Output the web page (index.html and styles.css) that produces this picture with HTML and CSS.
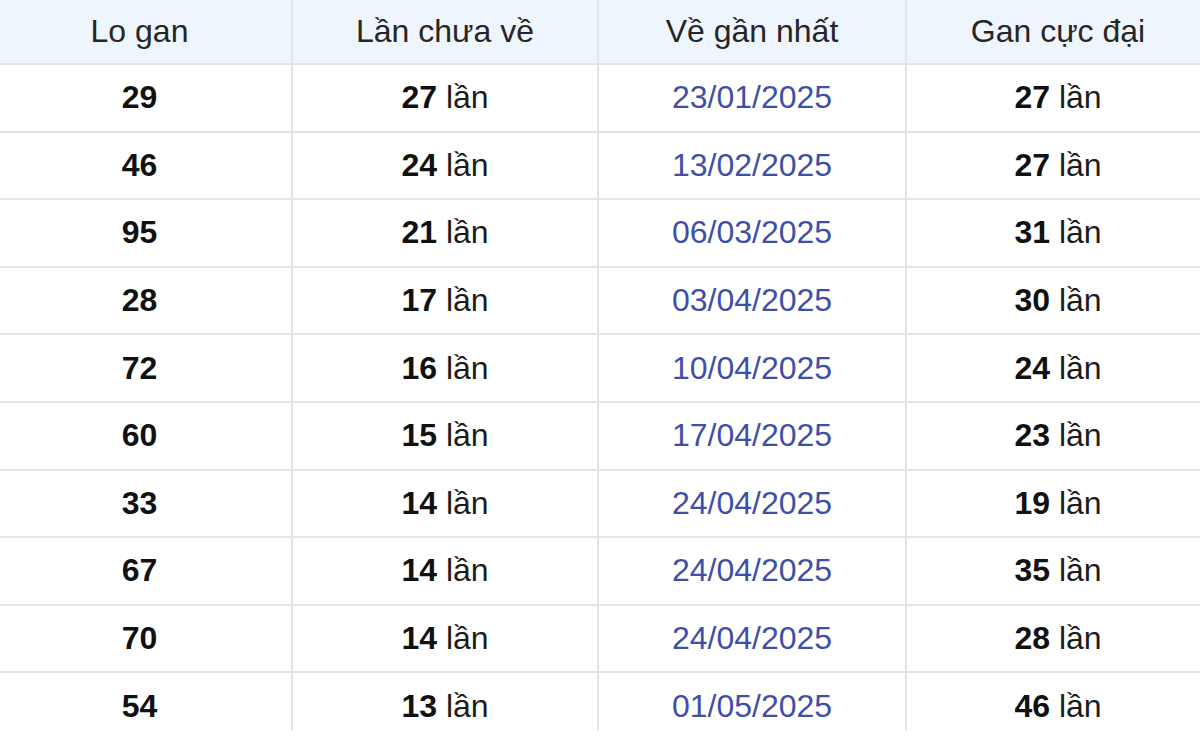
FILE: index.html
```html
<!DOCTYPE html>
<html lang="vi">
<head>
<meta charset="utf-8">
<link rel="stylesheet" href="styles.css">
</head>
<body>
<div class="wrap">
<table class="gan">
<colgroup><col class="c1"><col class="c2"><col class="c3"><col class="c4"></colgroup>
<thead>
<tr><th>Lo gan</th><th>Lần chưa về</th><th>Về gần nhất</th><th>Gan cực đại</th></tr>
</thead>
<tbody>
<tr><td class="num">29</td><td><b>27</b> lần</td><td class="date">23/01/2025</td><td><b>27</b> lần</td></tr>
<tr><td class="num">46</td><td><b>24</b> lần</td><td class="date">13/02/2025</td><td><b>27</b> lần</td></tr>
<tr><td class="num">95</td><td><b>21</b> lần</td><td class="date">06/03/2025</td><td><b>31</b> lần</td></tr>
<tr><td class="num">28</td><td><b>17</b> lần</td><td class="date">03/04/2025</td><td><b>30</b> lần</td></tr>
<tr><td class="num">72</td><td><b>16</b> lần</td><td class="date">10/04/2025</td><td><b>24</b> lần</td></tr>
<tr><td class="num">60</td><td><b>15</b> lần</td><td class="date">17/04/2025</td><td><b>23</b> lần</td></tr>
<tr><td class="num">33</td><td><b>14</b> lần</td><td class="date">24/04/2025</td><td><b>19</b> lần</td></tr>
<tr><td class="num">67</td><td><b>14</b> lần</td><td class="date">24/04/2025</td><td><b>35</b> lần</td></tr>
<tr><td class="num">70</td><td><b>14</b> lần</td><td class="date">24/04/2025</td><td><b>28</b> lần</td></tr>
<tr><td class="num">54</td><td><b>13</b> lần</td><td class="date">01/05/2025</td><td><b>46</b> lần</td></tr>
</tbody>
</table>
</div>
</body>
</html>
```

FILE: styles.css
```css
html, body {
  margin: 0;
  padding: 0;
  background: #ffffff;
}
.wrap {
  height: 730px;
  overflow: hidden;
  width: 1200px;
}
.gan {
  margin-left: -14px;
  width: 1223px;
  table-layout: fixed;
  border-collapse: collapse;
  font-family: "Liberation Sans", Arial, sans-serif;
  font-size: 32px;
  color: #1c1c1c;
}
.c1 { width: 305px; }
.c2 { width: 306px; }
.c3 { width: 308px; }
.c4 { width: 304px; }
.gan th, .gan td {
  border: 2px solid #e4e4e6;
  text-align: center;
  padding: 0;
}
.gan th {
  background: #eef5fc;
  font-weight: normal;
  height: 63px;
  color: #262626;
}
.gan td {
  height: 65.6px;
}
.gan thead tr th { border-top: none; }
.gan td b, .gan td.num {
  font-weight: bold;
  color: #111111;
}
.gan td.date {
  color: #3f4fa8;
}
```
